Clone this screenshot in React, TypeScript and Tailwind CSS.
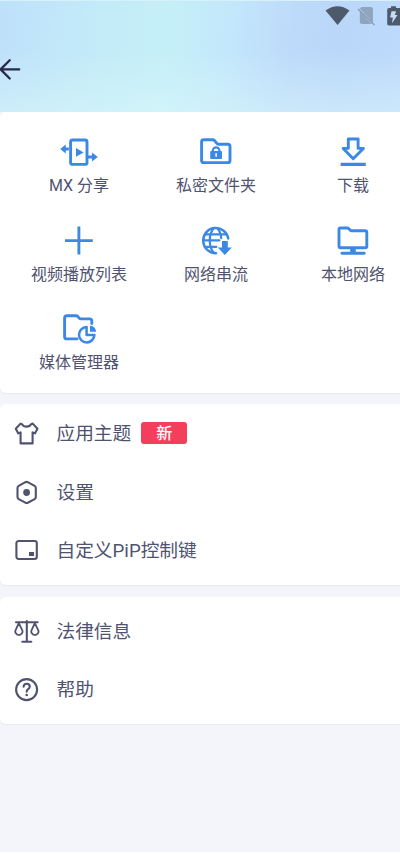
import type { ReactNode } from 'react';

type ToolItem = {
  label: string;
  icon: ReactNode;
};

type MenuItem = {
  label: string;
  badge?: string;
  icon: ReactNode;
};

const tools: ToolItem[] = [
  {
    label: 'MX 分享',
    icon: (
      <>
        <rect x="11.6" y="4" width="16.4" height="24.4" rx="2" />
        <path d="M17 12v8.8l7.6-4.4z" fill="currentColor" stroke="none" />
        <path d="M9.8 13H5" strokeLinecap="butt" />
        <path d="M6.8 8.6v8.8L1.2 13zM33 16.6v8.8l5.8-4.4z" fill="currentColor" stroke="none" />
        <path d="M29 21h5" strokeLinecap="butt" />
      </>
    ),
  },
  {
    label: '私密文件夹',
    icon: (
      <>
        <path d="M7.6 3.8h9.2q1 0 1.8.9l2.2 2.7q.6.8 1.6.8h9.4q2.2 0 2.2 2.2v14q0 2.2-2.2 2.2H7.8q-2.2 0-2.2-2.2V5.8q0-2 2-2z" />
        <path d="M16.8 16v-1.4a3.3 3.3 0 0 1 6.6 0V16" strokeWidth="2.2" />
        <rect x="14.2" y="15" width="11.8" height="8" rx="1" fill="currentColor" stroke="none" />
        <path d="M20.1 17.8v2.4" stroke="#fff" strokeWidth="1.5" />
      </>
    ),
  },
  {
    label: '下载',
    icon: (
      <>
        <path d="M15.3 3h9.8v9.4h5.3L20.2 22.8 10.2 12.4h5.1z" />
        <path d="M7.6 28.4h25.2" strokeWidth="3.2" strokeLinecap="butt" />
      </>
    ),
  },
  {
    label: '视频播放列表',
    icon: <path d="M6 15.6h27.8M19.9 1.6v28" strokeLinecap="butt" />,
  },
  {
    label: '网络串流',
    icon: (
      <>
        <path d="M32.2 13.4A12.6 12.6 0 1 0 20 28.2" strokeWidth="2.5" />
        <path
          d="M17.8 3.2c-5.4 6-5.4 18.4 0 24.6M21.4 3.2c2.4 2.8 3.6 6.2 3.8 10M9 9.4h21.800M7.4 15.4h16M9 21.8h11.4"
          strokeWidth="2.2"
        />
        <path d="M26 16h5.8v6.6h4L28.8 30l-7-7.4H26z" fill="currentColor" stroke="none" />
      </>
    ),
  },
  {
    label: '本地网络',
    icon: (
      <>
        <path d="M7.4 3h6.800q.9 0 1.6.7l1.5 1.5q.6.6 1.5.6h13.400q1.600 0 1.600 1.600v13.800q0 1.600-1.600 1.600H7.600Q6 22.800 6 21.200V4.400Q6 3 7.400 3z" />
        <path d="M20 23.6v5" strokeWidth="5.5" strokeLinecap="butt" />
        <path d="M9 28.2h22.2" />
      </>
    ),
  },
  {
    label: '媒体管理器',
    icon: (
      <>
        <path d="M18 25.9H7.8q-2.2 0-2.2-2.200V5q0-2.200 2.200-2.200h9.400q1 0 1.700.8l1.300 1.500q.7.800 1.800.8h8.600q2.200 0 2.200 2.200v2.400" />
        <path d="M27.6 14a7.7 7.7 0 1 0 7.8 7.9h-7.8z" strokeWidth="2.5" />
        <path d="M31 12.4q5.6.9 6.2 6.4H31z" fill="currentColor" stroke="none" />
      </>
    ),
  },
];

const settingsItems: MenuItem[] = [
  {
    label: '应用主题',
    badge: '新',
    icon: (
      <path d="M10 5.2 8.5 4.6 3.8 9.8l2.5 4.6 2.3-1v11h12v-11l2.3 1 2.6-4.6-4.8-5.2-1.6.6q-1.2 2.4-4.5 2.4T10 5.2z" />
    ),
  },
  {
    label: '设置',
    icon: (
      <>
        <path d="M13.4 4.2q1.2-.6 2.4 0l6.8 3.7q1.2.7 1.2 2v9.2q0 1.3-1.2 2l-6.8 3.6q-1.2.6-2.4 0l-6.7-3.6q-1.2-.7-1.2-2V9.900q0-1.300 1.200-2z" />
        <circle cx="14.6" cy="14.5" r="3.4" fill="currentColor" stroke="none" />
      </>
    ),
  },
  {
    label: '自定义PiP控制键',
    icon: (
      <>
        <rect x="4.4" y="5" width="20.4" height="18" rx="2.2" />
        <rect x="17" y="16" width="5" height="4" fill="currentColor" stroke="none" />
      </>
    ),
  },
];

const aboutItems: MenuItem[] = [
  {
    label: '法律信息',
    icon: (
      <>
        <path d="M4 5.2h21.600M14.800 4v20.600M10.300 24.800h9" />
        <path d="M6.800 6.200 3.700 12.800a3.600 3.600 0 1 0 6.400 0zM22.800 6.200l-3.100 6.600a3.600 3.600 0 1 0 6.400 0z" strokeWidth="1.8" />
      </>
    ),
  },
  {
    label: '帮助',
    icon: (
      <>
        <circle cx="14.6" cy="14.6" r="10.5" />
        <path d="M11.6 11.8q.2-3 3.100-3t3.100 2.700q0 1.500-1.700 2.600-1.400.9-1.400 2.600" />
        <circle cx="14.7" cy="20" r="1.3" fill="currentColor" stroke="none" />
      </>
    ),
  },
];

function StatusBar() {
  return (
    <div className="flex h-8 items-center pl-[324px] text-[#4c5a6a]">
      <svg className="h-8 w-[76px] shrink-0" viewBox="324 0 76 32" fill="currentColor">
        <path d="M325.5 9.5q12-8.5 24 0l-11.9 14.5z" />
        <path d="M361.5 6H371q2 0 2 2v13.5L359.8 7.7zM359.8 10.5 371.8 23H361.8q-2 0-2-2z" opacity=".4" />
        <path d="m358 8 16.5 16" stroke="currentColor" strokeWidth="1.2" opacity=".5" />
        <path d="M391 5.2h5V7h4v17.5h-11q-1.800 0-1.800-1.800V8.800Q387.200 7 389 7h2z" />
        <path d="M391.5 10.2h4.600l-1.200 3.700h2.600l-5.500 8.300.9-5.700h-2.800z" fill="#c5ddf9" />
      </svg>
    </div>
  );
}

function Header() {
  return (
    <header className="h-28 shrink-0 border-t border-[#d8effc] bg-[linear-gradient(to_bottom,transparent_45%,rgba(222,250,250,0.45)),linear-gradient(95deg,#bee1fa_0%,#c3ebf8_25%,#c5eff8_42%,#c3e8fb_56%,#bddafa_72%,#bad7fa_84%,#bed9fb_100%)]">
      <StatusBar />
      <button aria-label="返回" className="mt-6 block text-[#29294b]">
        <svg className="h-7 w-6" viewBox="0 0 24 28" fill="none" stroke="currentColor" strokeWidth="2.3" strokeLinecap="round" strokeLinejoin="round">
          <path d="M19.2 12.4H.8M9.7 3.3.6 12.4l9.1 9.1" />
        </svg>
      </button>
    </header>
  );
}

function ToolGrid() {
  return (
    <section className="h-[281px] shrink-0 overflow-hidden rounded-l-md bg-white pl-[10.5px] pt-6 shadow-[0_1px_2px_rgba(50,50,90,0.06)]">
      <div className="grid w-[411px] auto-rows-[88.5px] grid-cols-3">
        {tools.map((tool) => (
          <button key={tool.label} className="flex flex-col items-center">
            <svg className="h-8 w-10 text-[#3b88e5]" viewBox="0 0 40 32" fill="none" stroke="currentColor" strokeWidth="2.9" strokeLinecap="round" strokeLinejoin="round">
              {tool.icon}
            </svg>
            <span className="mt-1.5 whitespace-nowrap text-base leading-6">{tool.label}</span>
          </button>
        ))}
      </div>
    </section>
  );
}

function MenuRow({ item }: { item: MenuItem }) {
  return (
    <button className="flex h-[58.5px] w-full items-center pl-3 text-left">
      <svg className="size-7 shrink-0" viewBox="0 0 28 28" fill="none" stroke="currentColor" strokeWidth="2.1" strokeLinecap="round" strokeLinejoin="round">
        {item.icon}
      </svg>
      <span className="ml-[16.5px] whitespace-nowrap pt-0.5 text-[18.7px] leading-7">{item.label}</span>
      {item.badge && (
        <span className="ml-2.5 flex h-[22px] w-[46px] items-center justify-center rounded-[3px] bg-[#f43f5c] pt-px text-base font-medium text-white">
          {item.badge}
        </span>
      )}
    </button>
  );
}

export default function App() {
  return (
    <div className="flex h-[854px] w-full flex-col overflow-hidden border-b-2 border-white bg-[#f4f5fa] font-[Roboto,'Noto_Sans_CJK_SC',sans-serif] text-[#505370]">
      <Header />
      <ToolGrid />
      <section className="mt-[11px] h-[181px] shrink-0 rounded-l-md bg-white shadow-[0_1px_2px_rgba(50,50,90,0.06)]">
        {settingsItems.map((item) => (
          <MenuRow key={item.label} item={item} />
        ))}
      </section>
      <section className="mt-3 h-[127px] shrink-0 rounded-l-md bg-white pt-[4.5px] shadow-[0_1px_2px_rgba(50,50,90,0.06)]">
        {aboutItems.map((item) => (
          <MenuRow key={item.label} item={item} />
        ))}
      </section>
    </div>
  );
}
